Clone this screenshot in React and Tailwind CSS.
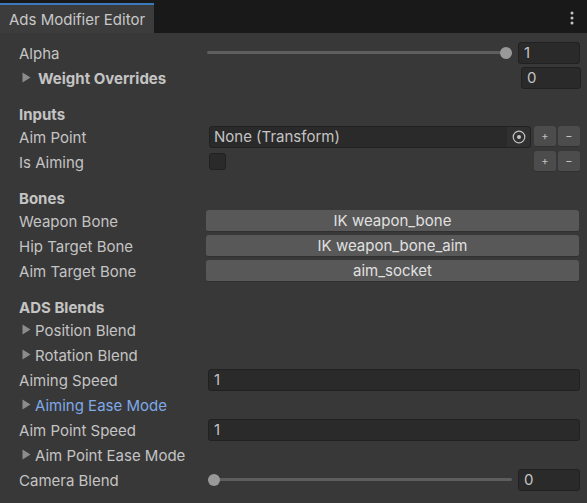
import React from 'react';

const font = { fontFamily: 'Inter, "Noto Sans", sans-serif' };

function Tri({ wide }) {
    return (
        <svg width="9" height="11" viewBox="0 0 9 11" className={`${wide ? 'mr-[7px]' : 'mr-[4px]'} shrink-0`}>
            <path d="M0.5 0.5 L8.5 5.5 L0.5 10.5 Z" fill="#8c8c8c" />
        </svg>
    );
}

function Row({ label, children, fold, blue, bold }) {
    return (
        <div className="flex items-center h-[25px]">
            <div className={`w-[188px] shrink-0 flex items-center ${fold ? 'pl-[3px]' : ''}`}>
                {fold && <Tri wide={bold} />}
                <span className={`pt-[3px] ${blue ? 'text-[#7fa9e8]' : 'text-[#c4c4c4]'} ${bold ? 'font-bold' : ''} whitespace-nowrap`}>{label}</span>
            </div>
            <div className="flex-1 flex items-center min-w-0">{children}</div>
        </div>
    );
}

function Header({ children }) {
    return (
        <div className="h-[20px] mt-[14px] pt-[3px] flex items-center font-bold text-[#c4c4c4]">
            {children}
        </div>
    );
}

function NumField({ value, className = '' }) {
    return (
        <div className={`h-[22px] rounded-[3px] bg-[#2a2a2a] border border-[#212121] flex items-center pl-[5px] pt-[2px] text-[#c4c4c4] ${className}`}>
            {value}
        </div>
    );
}

function Slider({ pos }) {
    return (
        <div className="flex items-center w-full">
            <div className="relative flex-1 h-[12px] flex items-center">
                <div className="h-[3px] w-full bg-[#5e5e5e] rounded-full" />
                <div
                    className="absolute w-[12px] h-[12px] rounded-full bg-[#999999]"
                    style={{ left: pos === 'end' ? 'calc(100% - 12px)' : '0px' }}
                />
            </div>
            <NumField value={pos === 'end' ? '1' : '0'} className="w-[62px] ml-[6px]" />
        </div>
    );
}

function PM() {
    return (
        <div className="flex ml-[3px] gap-[2px]">
            <div className="w-[22px] h-[21px] rounded-[3px] bg-[#4c4c4c] border-b border-[#303030] flex items-center justify-center text-[#c4c4c4] text-[11px] leading-none">+</div>
            <div className="w-[22px] h-[21px] rounded-[3px] bg-[#4c4c4c] border-b border-[#303030] flex items-center justify-center text-[#c4c4c4] text-[11px] leading-none">−</div>
        </div>
    );
}

function BoneButton({ children }) {
    return (
        <div className="ml-[-1px] h-[22px] w-full rounded-[3px] bg-[#585858] border-b border-[#303030] flex items-center justify-center pt-[2px] text-[#e0e0e0]">
            {children}
        </div>
    );
}

export default function App() {
    return (
        <div className="w-[587px] h-[503px] bg-[#383838] text-[15px] overflow-hidden" style={font}>
            <div className="h-[33px] bg-[#191919] flex items-end justify-between">
                <div className="w-[154px] h-[30px] bg-[#3c3c3c] border-t-2 border-[#3a79bb] flex items-center pl-[9px] pt-[2px] text-[#c8c8c8] text-[15px]">
                    Ads Modifier Editor
                </div>
                <div className="h-[30px] pr-[13px] flex items-center">
                    <svg width="4" height="14" viewBox="0 0 4 14">
                        <circle cx="2" cy="2" r="1.5" fill="#c4c4c4" />
                        <circle cx="2" cy="7" r="1.5" fill="#c4c4c4" />
                        <circle cx="2" cy="12" r="1.5" fill="#c4c4c4" />
                    </svg>
                </div>
            </div>
            <div className="pl-[19px] pr-[7px] pt-[7px]">
                <Row label="Alpha"><Slider pos="end" /></Row>
                <Row label="Weight Overrides" fold bold>
                    <div className="flex-1" />
                    <NumField value="0" className="w-[60px] mr-[-1px]" />
                </Row>

                <Header>Inputs</Header>
                <Row label="Aim Point">
                    <div className="ml-[2px] flex-1 h-[22px] rounded-[3px] bg-[#2a2a2a] border border-[#212121] flex items-center">
                        <span className="pl-[4px] pt-[2px] flex-1 text-[#c4c4c4]">None (Transform)</span>
                        <div className="w-[23px] h-full bg-[#303030] rounded-r-[3px] flex items-center justify-center">
                            <svg width="14" height="14" viewBox="0 0 14 14">
                                <circle cx="7" cy="7" r="5.8" fill="none" stroke="#c4c4c4" strokeWidth="1.2" />
                                <circle cx="7" cy="7" r="2" fill="#c4c4c4" />
                            </svg>
                        </div>
                    </div>
                    <PM />
                </Row>
                <Row label="Is Aiming">
                    <div className="ml-[2px] w-[17px] h-[17px] rounded-[3px] bg-[#2a2a2a] border border-[#212121]" />
                    <div className="flex-1" />
                    <PM />
                </Row>

                <Header>Bones</Header>
                <Row label="Weapon Bone"><BoneButton>IK weapon_bone</BoneButton></Row>
                <Row label="Hip Target Bone"><BoneButton>IK weapon_bone_aim</BoneButton></Row>
                <Row label="Aim Target Bone"><BoneButton>aim_socket</BoneButton></Row>

                <Header>ADS Blends</Header>
                <Row label="Position Blend" fold />
                <Row label="Rotation Blend" fold />
                <Row label="Aiming Speed"><NumField value="1" className="flex-1 ml-[1px]" /></Row>
                <Row label="Aiming Ease Mode" fold blue />
                <Row label="Aim Point Speed"><NumField value="1" className="flex-1 ml-[1px]" /></Row>
                <Row label="Aim Point Ease Mode" fold />
                <Row label="Camera Blend">
                    <div className="flex items-center w-full pl-[1px]">
                        <Slider pos="start" />
                    </div>
                </Row>
            </div>
        </div>
    );
}
